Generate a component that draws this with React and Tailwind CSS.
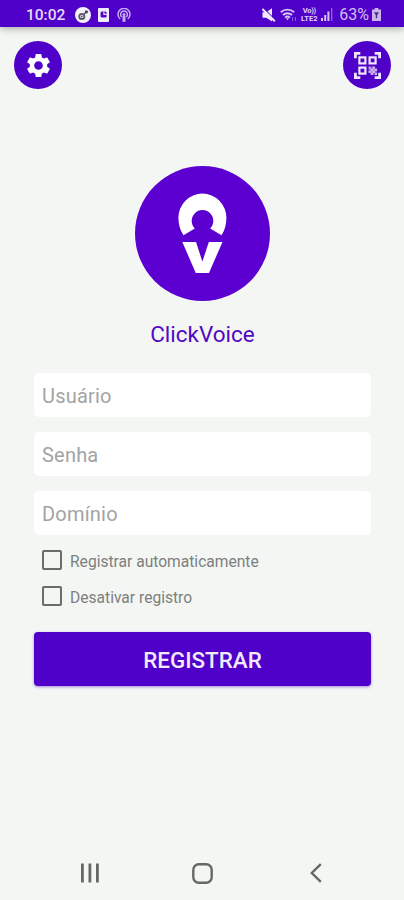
import { useState } from 'react';
import { MdSettings } from 'react-icons/md';

function ActiveSyncIcon() {
    return (
        <svg width="16" height="16" viewBox="0 0 16 16">
            <circle cx="8" cy="8" r="8" fill="#f4f1fb" />
            <circle cx="6.8" cy="9.4" r="2.6" fill="none" stroke="#5b5768" strokeWidth="1.8" />
            <circle cx="6.8" cy="9.4" r="0.9" fill="#5b5768" />
            <path d="M9 7.2 11 5.2" fill="none" stroke="#5b5768" strokeWidth="1.4" />
            <circle cx="11.4" cy="4.8" r="1.6" fill="#4b4658" />
        </svg>
    );
}

function ClockDocIcon() {
    return (
        <svg width="11" height="14" viewBox="0 0 11 14">
            <rect width="11" height="14" rx="1" fill="#f1ebfb" />
            <rect x="2.6" y="3.6" width="6" height="6" rx="1.4" fill="#4f00c9" />
            <path d="M5.9 3.6v2.8h2.8" fill="none" stroke="#f1ebfb" strokeWidth="1.1" />
        </svg>
    );
}

function PodcastIcon() {
    return (
        <svg width="14" height="14" viewBox="0 0 14 14" fill="none" stroke="#c7adf0" strokeWidth="1.5">
            <path d="M3.2 11a6 6 0 1 1 7.6 0" />
            <path d="M4.6 8.9a3.4 3.4 0 1 1 4.8 0" />
            <circle cx="7" cy="6.4" r="1.5" fill="#c7adf0" stroke="none" />
            <path d="M7 8v5.8" strokeWidth="3" />
        </svg>
    );
}

function MuteIcon() {
    return (
        <svg width="14" height="14" viewBox="0 0 14 14">
            <path d="M.5 4.2h3.8L10 .2v13.4L4.3 9.8H.5z" fill="#f1eafc" />
            <path d="M1.4 .2 13.8 12.4" stroke="#4f00c9" strokeWidth="1.1" />
            <path d="M.4 .9 12.8 13.2" stroke="#f1eafc" strokeWidth="2" />
        </svg>
    );
}

function WifiIcon() {
    return (
        <svg width="18" height="14" viewBox="0 0 18 14" fill="none" stroke="#d6c4f4" strokeWidth="1.9">
            <path d="M.8 4.2a10 10 0 0 1 13.4 0" />
            <path d="M3 7a6.6 6.6 0 0 1 9 0" />
            <path d="M5.1 9.6a3.6 3.6 0 0 1 4.8 0" />
            <path d="M5.9 10.3h3.2l-1.6 2z" fill="#d6c4f4" stroke="none" />
            <path d="M12.6 9v4M15.4 9v4" stroke="#8e5fdd" strokeWidth="1" />
        </svg>
    );
}

function SignalIcon() {
    return (
        <svg width="12" height="13" viewBox="0 0 12 13" fill="#d6c4f4">
            <rect x="0" y="10" width="2" height="3" />
            <rect x="3.2" y="7" width="2" height="6" />
            <rect x="6.4" y="3.5" width="2" height="9.5" />
            <rect x="10" y="0" width="1.4" height="13" fill="#8e5fdd" />
        </svg>
    );
}

function BatteryIcon() {
    return (
        <svg width="9" height="13" viewBox="0 0 9 13">
            <path d="M2.7 0h3.6v1.6H9V13H0V1.6h2.7z" fill="#cbb5ee" />
            <path d="M2 4.2h5L5.2 7.3v3H3.8v-3z" fill="#4f2f86" />
        </svg>
    );
}

function QrIcon() {
    return (
        <svg width="27" height="27" viewBox="0 0 27 27" fill="none" stroke="#efe7fc">
            <path
                d="M1.4 6.3V1.4h4.9M20.7 1.4h4.9v4.9M25.6 20.7v4.9h-4.9M6.3 25.6H1.4v-4.9"
                strokeWidth="2.8"
            />
            <rect x="5.4" y="5.4" width="6" height="6" strokeWidth="2.2" />
            <rect x="15.6" y="5.4" width="6" height="6" strokeWidth="2.2" />
            <rect x="5.4" y="15.6" width="6" height="6" strokeWidth="2.2" />
            <g fill="#cdb8f1" stroke="none">
                <rect x="14.6" y="16.6" width="8.2" height="4.2" opacity="0.5" />
                <rect x="16.6" y="14.6" width="4.2" height="8.2" opacity="0.5" />
                <rect x="14.6" y="14.6" width="2.2" height="2.2" />
                <rect x="18.8" y="14.6" width="2.2" height="2.2" />
                <rect x="16.8" y="16.7" width="2.2" height="2.2" />
                <rect x="20.9" y="16.7" width="2.2" height="2.2" />
                <rect x="14.6" y="18.7" width="2.2" height="2.2" />
                <rect x="18.8" y="18.7" width="2.2" height="2.2" />
                <rect x="16.8" y="20.8" width="2.2" height="2.2" />
                <rect x="20.9" y="20.8" width="2.2" height="2.2" />
            </g>
        </svg>
    );
}

function Logo() {
    return (
        <svg width="135" height="135" viewBox="0 0 135 135">
            <circle cx="67.5" cy="67.5" r="67.5" fill="#5c00d2" />
            <path
                d="M48.5 69.3C45 64.5 43.4 58 43.4 51.6A24 24 0 0 1 91.4 51.6C91.4 58 90 64.5 86.5 69.3L75.2 62.4A10.8 10.8 0 1 0 59.8 62.4Z"
                fill="#fff"
            />
            <text
                x="47.3"
                y="106.6"
                textLength="40.4"
                lengthAdjust="spacingAndGlyphs"
                fontFamily="Roboto, sans-serif"
                fontWeight="900"
                fontSize="59.5"
                fill="#fff"
            >
                v
            </text>
        </svg>
    );
}

function StatusBar() {
    return (
        <div className="flex h-[27px] items-center justify-between bg-[#4f00c9] pr-[23px] pl-[26px] shadow-[0_2px_7px_rgba(0,0,0,0.3)]">
            <div className="flex items-center pt-[2px]">
                <span className="w-[49px] text-[15.5px] leading-4 font-medium text-[#e6dbf8]">10:02</span>
                <ActiveSyncIcon />
                <span className="ml-[7px]"><ClockDocIcon /></span>
                <span className="ml-[8px]"><PodcastIcon /></span>
            </div>
            <div className="flex items-center pt-[2px]">
                <MuteIcon />
                <span className="ml-[4px]"><WifiIcon /></span>
                <span className="ml-[2px] flex w-[18px] flex-col items-center gap-px text-[7.5px] leading-[7px] font-bold text-[#e0d2f7]">
                    <span className="h-[6px] leading-[6px] tracking-[-0.3px]">Vo))</span>
                    <span className="h-[7px]">LTE2</span>
                </span>
                <span className="ml-[3px]"><SignalIcon /></span>
                <span className="ml-[6px] text-[16px] leading-4 text-[#d3bff3]">63%</span>
                <span className="ml-[3px]"><BatteryIcon /></span>
            </div>
        </div>
    );
}

function RoundButton({ label, children }) {
    return (
        <button
            aria-label={label}
            className="flex size-12 items-center justify-center rounded-full bg-[#4f00c9] text-white"
        >
            {children}
        </button>
    );
}

function Field({ placeholder, type = 'text' }) {
    return (
        <input
            type={type}
            placeholder={placeholder}
            className="h-11 w-full rounded-[5px] bg-white px-2 pt-[2px] text-[20px] tracking-[0.2px] text-[#444] outline-none placeholder:text-[#a3a3a3]"
        />
    );
}

function CheckRow({ label }) {
    const [checked, setChecked] = useState(false);

    return (
        <label className="flex h-5 items-center gap-2">
            <input
                type="checkbox"
                checked={checked}
                onChange={(e) => setChecked(e.target.checked)}
                className="size-5 appearance-none rounded-[2px] border-2 border-[#6a6c6a] checked:bg-[#4f00c9]"
            />
            <span className="pt-[3px] text-[15.6px] leading-5 text-[#7d7f7d]">{label}</span>
        </label>
    );
}

function NavBar() {
    return (
        <div className="flex h-[54px] items-center pl-[80px] text-[#666866]">
            <svg width="20" height="20" viewBox="0 0 20 20" fill="none" stroke="currentColor" strokeWidth="2.8">
                <path d="M2.4 .5v19M9.9 .5v19M17.4 .5v19" />
            </svg>
            <svg className="ml-[92px]" width="21" height="21" viewBox="0 0 21 21" fill="none" stroke="currentColor" strokeWidth="2.4">
                <rect x="1.3" y="1.3" width="18.4" height="18.4" rx="5.5" />
            </svg>
            <svg className="ml-[97px]" width="12" height="20" viewBox="0 0 12 20" fill="none" stroke="currentColor" strokeWidth="2.4">
                <path d="M10.8 1.2 1.8 10l9 8.8" />
            </svg>
        </div>
    );
}

export default function App() {
    return (
        <div className="flex h-[900px] w-[404px] flex-col bg-[#f4f6f4] font-[Roboto,sans-serif]">
            <StatusBar />

            <div className="flex justify-between pt-[14px] pr-[13px] pl-[14px]">
                <RoundButton label="Configurações">
                    <MdSettings className="size-[29px]" />
                </RoundButton>
                <RoundButton label="QR Code">
                    <QrIcon />
                </RoundButton>
            </div>

            <div className="flex flex-col items-center pt-[77px] pl-px">
                <Logo />
                <h1 className="mt-[19px] text-[22.5px] leading-7 text-[#5209c4]">ClickVoice</h1>
            </div>

            <form className="flex flex-1 flex-col pt-[25px] pr-[33px] pl-[34px]" onSubmit={(e) => e.preventDefault()}>
                <div className="flex flex-col gap-[15px]">
                    <Field placeholder="Usuário" />
                    <Field placeholder="Senha" type="password" />
                    <Field placeholder="Domínio" />
                </div>
                <div className="mt-[15px] flex flex-col gap-4 pl-2">
                    <CheckRow label="Registrar automaticamente" />
                    <CheckRow label="Desativar registro" />
                </div>
                <button className="mt-[26px] h-[54px] w-full rounded-[4px] bg-[#4f00c9] pt-[4px] text-[22.4px] font-medium text-[#f1eafc] shadow-[0_1px_3px_rgba(79,0,201,0.45)]">
                    REGISTRAR
                </button>
            </form>

            <NavBar />
        </div>
    );
}
